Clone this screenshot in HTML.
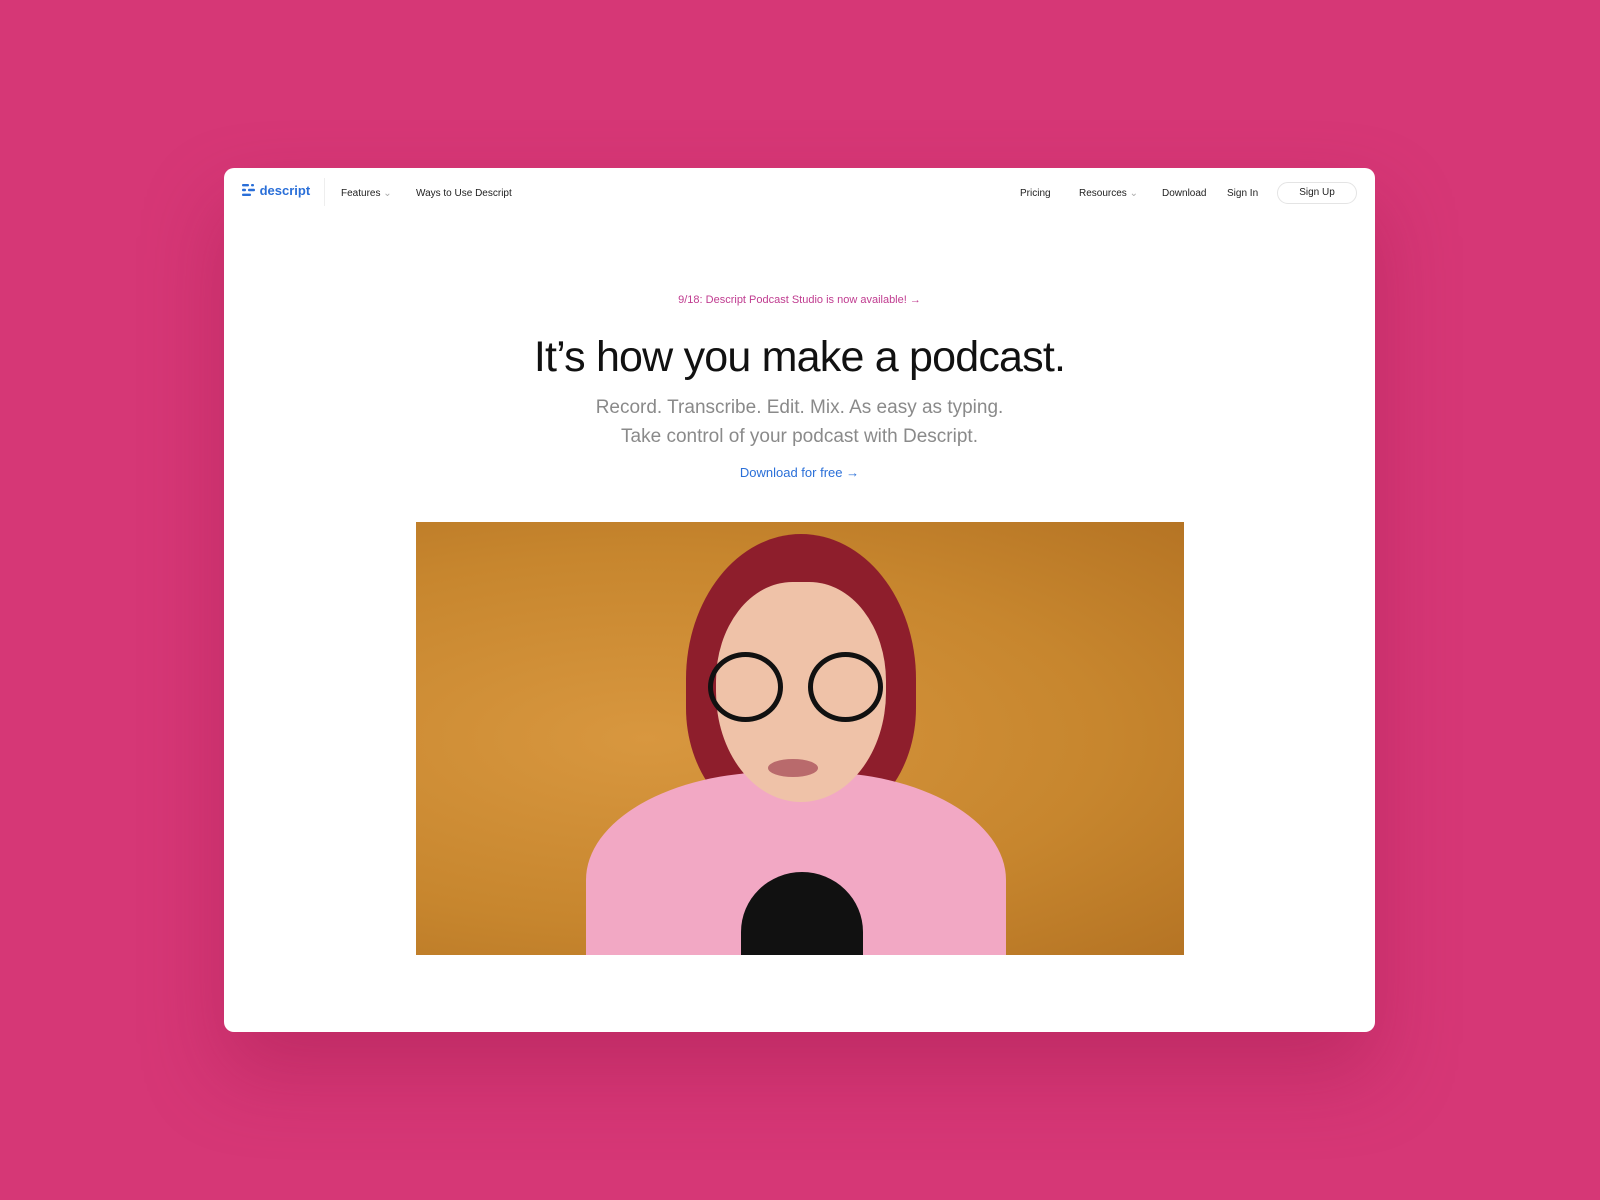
<!DOCTYPE html>
<html><head><meta charset="utf-8"><style>
*{margin:0;padding:0;box-sizing:border-box}
body{width:1600px;height:1200px;background:#d63776;font-family:"Liberation Sans",sans-serif;position:relative;overflow:hidden}
.card{position:absolute;left:224px;top:168px;width:1151px;height:864px;background:#fff;border-radius:10px;box-shadow:0 40px 80px rgba(150,20,70,.35)}
.nav{position:absolute;top:0;left:0;right:0;height:48px;font-size:10px;color:#222}
.nav span{position:absolute;top:20px}
.logo{position:absolute;left:18px;top:15px;color:#2a6fd8;font-size:13px;font-weight:bold}
.sep{position:absolute;left:100px;top:10px;width:1px;height:28px;background:#eee}
.btn{position:absolute;left:1053px;top:14px;width:80px;height:22px;border:1px solid #e4e4e4;border-radius:11px;font-size:10px;text-align:center;line-height:20px}
.c{position:absolute;left:0;right:0;text-align:center}
.photo{position:absolute;left:192px;top:354px;width:768px;height:433px;overflow:hidden;background:radial-gradient(ellipse at 30% 50%,#d8973f,#c7862e 60%,#b57424)}
</style></head><body>
<div class="card">
<div class="nav">
<div class="logo"><svg width="14" height="14" viewBox="0 0 14 14" style="vertical-align:-2px"><g fill="#2a6fd8"><rect x="0" y="1" width="7" height="2.4" rx="1"/><rect x="0" y="5.8" width="4" height="2.4" rx="1"/><rect x="6" y="5.8" width="7" height="2.4" rx="1"/><rect x="0" y="10.6" width="9" height="2.4" rx="1"/><rect x="9" y="1" width="3" height="2.4" rx="1"/></g></svg> descript</div>
<div class="sep"></div>
<span style="left:117px">Features <span style="position:static;color:#aaa">⌄</span></span>
<span style="left:192px">Ways to Use Descript</span>
<span style="left:796px">Pricing</span>
<span style="left:855px">Resources <span style="position:static;color:#aaa">⌄</span></span>
<span style="left:938px">Download</span>
<span style="left:1003px">Sign In</span>
<div class="btn">Sign Up</div>
</div>
<div class="c" style="top:126px;font-size:11px;color:#c03c90">9/18: Descript Podcast Studio is now available! →</div>
<div class="c" style="top:165px;font-size:43px;color:#111;letter-spacing:-0.8px">It’s how you make a podcast.</div>
<div class="c" style="top:225px;font-size:19px;color:#8a8a8a;line-height:29px">Record. Transcribe. Edit. Mix. As easy as typing.<br>Take control of your podcast with Descript.</div>
<div class="c" style="top:297px;font-size:13px;color:#2a6fd8">Download for free →</div>
<div class="photo">
<div style="position:absolute;left:270px;top:12px;width:230px;height:290px;border-radius:50% 50% 40% 40%;background:#8e1e2c"></div>
<div style="position:absolute;left:170px;top:250px;width:420px;height:240px;border-radius:45% 45% 0 0;background:#f2a8c4"></div>
<div style="position:absolute;left:300px;top:60px;width:170px;height:220px;border-radius:45% 45% 50% 50%;background:#efc2a8"></div>
<div style="position:absolute;left:292px;top:130px;width:75px;height:70px;border:5px solid #111;border-radius:50%"></div>
<div style="position:absolute;left:392px;top:130px;width:75px;height:70px;border:5px solid #111;border-radius:50%"></div>
<div style="position:absolute;left:352px;top:237px;width:50px;height:18px;border-radius:50%;background:#b96a6c"></div>
<div style="position:absolute;left:325px;top:350px;width:122px;height:120px;border-radius:50% 50% 0 0;background:#111"></div>
</div>
</div>
</body></html>
